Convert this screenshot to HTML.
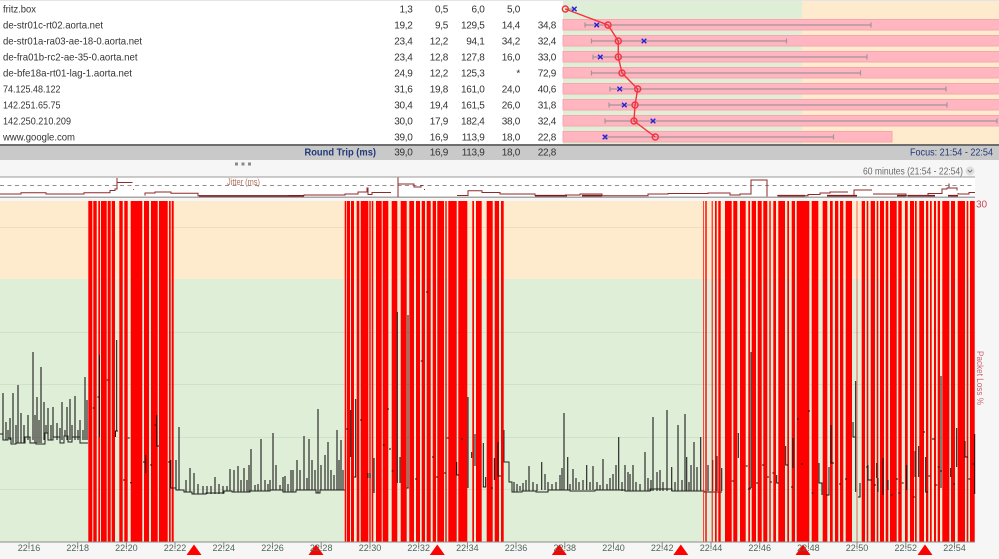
<!DOCTYPE html>
<html><head><meta charset="utf-8"><style>
html,body{margin:0;padding:0;background:#fff;width:999px;height:559px;overflow:hidden}
svg{display:block;filter:blur(.3px)}
text{font-family:"Liberation Sans",sans-serif;font-size:10.5px}
.h{fill:#333}
.n{fill:#333;text-anchor:end;font-size:10px;letter-spacing:-.3px}
.t{fill:#4f6655;font-size:9px;text-anchor:middle}
.b{fill:#1f3a78}
</style></head><body>
<svg width="999" height="559" viewBox="0 0 999 559" xmlns="http://www.w3.org/2000/svg">
<rect width="999" height="559" fill="#fff"/>
<rect x="0" y="0" width="999" height="1" fill="#e4e4e4"/>
<!-- hop chart background -->
<rect x="563" y="1" width="239" height="143" fill="#dfeed6"/>
<rect x="802" y="1" width="197" height="143" fill="#feeacd"/>
<g fill="#ffb6c1" stroke="#f7a6ac" stroke-width="1">
<rect x="563" y="19.5" width="437" height="10.5"/>
<rect x="563" y="35.5" width="437" height="10.5"/>
<rect x="563" y="51.5" width="437" height="10.5"/>
<rect x="563" y="67.5" width="437" height="10.5"/>
<rect x="563" y="83.5" width="437" height="10.5"/>
<rect x="563" y="99.5" width="437" height="10.5"/>
<rect x="563" y="115.5" width="437" height="10.5"/>
<rect x="563" y="131.5" width="329" height="10.5"/>
</g>
<!-- whiskers -->
<path fill="none" stroke="#a0949a" stroke-width="1.2" d="M585 25H871M585 22.5V27.5M871 22.5V27.5M591.5 41H786.5M591.5 38.5V43.5M786.5 38.5V43.5M593 57H867M593 54.5V59.5M867 54.5V59.5M591.5 73H860.5M591.5 70.5V75.5M860.5 70.5V75.5M610 89H946M610 86.5V91.5M946 86.5V91.5M609 105H947M609 102.5V107.5M947 102.5V107.5M605 121H997M605 118.5V123.5M997 118.5V123.5M605 137H833.5M605 134.5V139.5M833.5 134.5V139.5M565 9H574"/>
<!-- latency line -->
<polyline fill="none" stroke="#f5333f" stroke-width="1.4" points="565.3,9 608,25 618.3,41 618.3,57 622,73 637.7,89 635,105 634,121 655.3,137"/>
<g fill="none" stroke="#f5333f" stroke-width="1.4">
<circle cx="565.3" cy="9" r="3"/><circle cx="608" cy="25" r="3"/><circle cx="618.3" cy="41" r="3"/><circle cx="618.3" cy="57" r="3"/><circle cx="622" cy="73" r="3"/><circle cx="637.7" cy="89" r="3"/><circle cx="635" cy="105" r="3"/><circle cx="634" cy="121" r="3"/><circle cx="655.3" cy="137" r="3"/>
</g>
<path fill="none" stroke="#2222dd" stroke-width="1.4" d="M572 6.700l4.600 4.600m0-4.600l-4.600 4.600M594.400 22.700l4.600 4.600m0-4.600l-4.600 4.600M641.700 38.700l4.600 4.600m0-4.600l-4.600 4.600M598 54.700l4.600 4.600m0-4.600l-4.600 4.600M617.400 86.700l4.600 4.600m0-4.600l-4.600 4.600M622 102.700l4.600 4.600m0-4.600l-4.600 4.600M650.700 118.700l4.600 4.600m0-4.600l-4.600 4.600M602.700 134.700l4.600 4.600m0-4.600l-4.600 4.600"/>
<!-- table -->
<text class="h" x="3" y="12.500" textLength="33" lengthAdjust="spacingAndGlyphs">fritz.box</text>
<text class="h" x="3" y="28.500" textLength="100" lengthAdjust="spacingAndGlyphs">de-str01c-rt02.aorta.net</text>
<text class="h" x="3" y="44.500" textLength="139" lengthAdjust="spacingAndGlyphs">de-str01a-ra03-ae-18-0.aorta.net</text>
<text class="h" x="3" y="60.500" textLength="134.500" lengthAdjust="spacingAndGlyphs">de-fra01b-rc2-ae-35-0.aorta.net</text>
<text class="h" x="3" y="76.500" textLength="129" lengthAdjust="spacingAndGlyphs">de-bfe18a-rt01-lag-1.aorta.net</text>
<text class="h" x="3" y="92.500" textLength="57.500" lengthAdjust="spacingAndGlyphs">74.125.48.122</text>
<text class="h" x="3" y="108.500" textLength="57.500" lengthAdjust="spacingAndGlyphs">142.251.65.75</text>
<text class="h" x="3" y="124.500" textLength="68" lengthAdjust="spacingAndGlyphs">142.250.210.209</text>
<text class="h" x="3" y="140.500" textLength="72" lengthAdjust="spacingAndGlyphs">www.google.com</text>
<g>
<text class="n" x="412.500" y="12.500">1,3</text><text class="n" x="448" y="12.500">0,5</text><text class="n" x="484.500" y="12.500">6,0</text><text class="n" x="520" y="12.500">5,0</text>
<text class="n" x="412.500" y="28.500">19,2</text><text class="n" x="448" y="28.500">9,5</text><text class="n" x="484.500" y="28.500">129,5</text><text class="n" x="520" y="28.500">14,4</text><text class="n" x="556" y="28.500">34,8</text>
<text class="n" x="412.500" y="44.500">23,4</text><text class="n" x="448" y="44.500">12,2</text><text class="n" x="484.500" y="44.500">94,1</text><text class="n" x="520" y="44.500">34,2</text><text class="n" x="556" y="44.500">32,4</text>
<text class="n" x="412.500" y="60.500">23,4</text><text class="n" x="448" y="60.500">12,8</text><text class="n" x="484.500" y="60.500">127,8</text><text class="n" x="520" y="60.500">16,0</text><text class="n" x="556" y="60.500">33,0</text>
<text class="n" x="412.500" y="76.500">24,9</text><text class="n" x="448" y="76.500">12,2</text><text class="n" x="484.500" y="76.500">125,3</text><text class="n" x="520" y="76.500">*</text><text class="n" x="556" y="76.500">72,9</text>
<text class="n" x="412.500" y="92.500">31,6</text><text class="n" x="448" y="92.500">19,8</text><text class="n" x="484.500" y="92.500">161,0</text><text class="n" x="520" y="92.500">24,0</text><text class="n" x="556" y="92.500">40,6</text>
<text class="n" x="412.500" y="108.500">30,4</text><text class="n" x="448" y="108.500">19,4</text><text class="n" x="484.500" y="108.500">161,5</text><text class="n" x="520" y="108.500">26,0</text><text class="n" x="556" y="108.500">31,8</text>
<text class="n" x="412.500" y="124.500">30,0</text><text class="n" x="448" y="124.500">17,9</text><text class="n" x="484.500" y="124.500">182,4</text><text class="n" x="520" y="124.500">38,0</text><text class="n" x="556" y="124.500">32,4</text>
<text class="n" x="412.500" y="140.500">39,0</text><text class="n" x="448" y="140.500">16,9</text><text class="n" x="484.500" y="140.500">113,9</text><text class="n" x="520" y="140.500">18,0</text><text class="n" x="556" y="140.500">22,8</text>
</g>
<!-- summary band -->
<rect x="0" y="144" width="999" height="2" fill="#6e6e6e"/>
<rect x="0" y="146" width="999" height="14" fill="#c9c9c9"/>
<text class="b" x="304.500" y="155.500" style="font-weight:bold" textLength="71.500" lengthAdjust="spacingAndGlyphs">Round Trip (ms)</text>
<g>
<text class="n" x="412.500" y="155.500">39,0</text><text class="n" x="448" y="155.500">16,9</text><text class="n" x="484.500" y="155.500">113,9</text><text class="n" x="520" y="155.500">18,0</text><text class="n" x="556" y="155.500">22,8</text>
</g>
<text class="b" x="910" y="155.500" textLength="83" lengthAdjust="spacingAndGlyphs">Focus: 21:54 - 22:54</text>
<!-- splitter -->
<rect x="0" y="160" width="999" height="399" fill="#f6f6f6"/>
<rect x="235" y="162.500" width="3" height="3" fill="#8a8a8a"/><rect x="241.500" y="162.500" width="3" height="3" fill="#8a8a8a"/><rect x="248" y="162.500" width="3" height="3" fill="#8a8a8a"/>
<text x="863" y="174.500" fill="#6a6a6a" textLength="100" lengthAdjust="spacingAndGlyphs">60 minutes (21:54 - 22:54)</text>
<circle cx="970" cy="171" r="4.500" fill="#dedede"/>
<path d="M967.800 170l2.200 2.200 2.200-2.200" fill="none" stroke="#777" stroke-width="1"/>
<!-- jitter chart -->
<rect x="0" y="177" width="975" height="20" fill="#fff"/>
<rect x="0" y="176.500" width="975" height="1" fill="#9a9a9a"/>
<rect x="975" y="176.500" width="24" height="1" fill="#f6f6f6"/>
<rect x="0" y="196.500" width="975" height="1.500" fill="#a8a8a8"/>
<path d="M0 185.500H975" stroke="#8f8f8f" stroke-width="1" stroke-dasharray="4 3.500" fill="none"/>
<text x="227" y="185" fill="#b5705a" style="font-size:9px" textLength="33" lengthAdjust="spacingAndGlyphs">Jitter (ms)</text>
<path fill="none" stroke="#8d2a2a" stroke-width="1" d="M0 194H21V192.700H46V194H84V192.700H110V190.500H115V189H117V182.700V178M117 182.500H132.500M133 189.500h.8M145 195.500V193H155V192H171V193.300H198V195.700H289V195.500H304V195H345V194H358V192H367V188H368V194.500H372M372 195V192.500H391M398 177.500V197M398 184H414V187H421V185.500H423M424 189.500h1M457 195.500H468V190.700H482V192.500H500V194H535V195.700"/>
<path fill="none" stroke="#7a1a1a" stroke-width="1.600" d="M199 196H290M289 196H304M535 195.700H567M582 195.700H602M778 195.700H805M827 195.700H857M908 195.700H935M948 195.700H958M897 195.700H906"/>
<path fill="none" stroke="#8d2a2a" stroke-width="1" d="M565 195H580V194H602V195.700H648V194H668V193.500H708V193H730V195H740V194H751V186V180H767V196.500M777 195.700H808V194.500H820V193H830V192H848M854 195V190H872M873 194H906V195.700H928V193.500H942V189H947V188H957V190.500M958 193V194H969V192.500H975"/>
<path fill="none" stroke="#8d2a2a" stroke-width="1" d="M949 183.500V188"/>
<!-- main chart background -->
<rect x="0" y="201" width="975" height="78" fill="#feeacd"/>
<rect x="0" y="279" width="975" height="263" fill="#dfeed6"/>
<path stroke="#000" stroke-opacity=".06" stroke-width="1" fill="none" d="M0 227.500H975M0 332.500H975M0 384.500H975M0 437.500H975M0 489.500H975"/>
<!-- packet series: baselines -->
<path fill="none" stroke="#222" stroke-width="1" d="M0 434H3V440H8V438H11V444H16V443H25V437H30V443H36V444H45V433H48V440H53V437H60V443H64V436H68V442H72V437H80V443H88"/>
<path fill="none" stroke="#222" stroke-width="1" d="M172 488H176V490H184V492H192V494H206V493H224V491H232V492H250V491H270V490H283V492H296V490H316V493H320V490H345"/>
<path fill="none" stroke="#222" stroke-width="1" d="M504 430V462H509V482H512V492H522V491H536V492H548V490H570V491H595V490H625V491H650V489H672V491H704V492H722"/>
<!-- packet series: spikes -->
<path fill="none" stroke="#262626" stroke-width="1.150" d="M3 440V393M6 440V422M8 440V430M10 440V418M13 443V393M16 443V425M18 443V385M21 443V413M24 443V425M28 440V415M33 440V352M35 443V415M37 443V397M39 443V420M41 443V367M44 440V402M46 433V425M48 436V408M51 440V425M53 437V407M57 440V423M60 440V428M62 440V402M65 436V430M67 440V407M70 440V399M72 440V425M75 440V396M78 440V430M80 440V420M83 440V430M85 440V377M87 440V400"/>
<path fill="none" stroke="#262626" stroke-width="1.150" d="M176 490V460M179 490V427M186 492V480M190 492V468M194 494V473M198 494V484M203 494V486M207 494V486M211 494V486M215 494V477M219 494V484M223 494V486M227 491V486M230 491V469M234 492V470M238 492V466M241 492V480M244 492V468M247 492V480M249 492V465M251 491V449M255 491V485M258 491V484M261 491V439M265 491V480M268 491V484M270 491V480M273 490V433M276 490V465M280 490V485M283 492V477M285 492V476M288 492V484M291 492V470M293 492V470M297 490V460M300 490V470M304 490V436M307 490V478M309 490V439M312 490V460M315 490V470M318 493V409M321 490V465M325 490V455M328 490V442M331 490V470M334 490V475M337 490V430M339 490V460M341 490V440M343 490V470"/>
<path fill="none" stroke="#262626" stroke-width="1.150" d="M514 492V482M517 492V484M520 491V486M523 491V483M526 491V480M529 491V466M533 491V482M537 491V484M541.700 490V462M545 490V474M548 490V482M552 490V484M556 490V482M560 490V475M562 490V468M564 490V413M567.700 490V457M570 490V484M573 490V469M576 490V478M579 490V482M583 490V480M586.700 490V465M590 490V482M593 490V466M597 490V482M600 490V485M603 490V459M607 490V484M610 490V478M613 490V474M616 490V465M618.700 490V437M622 491V482M625 491V465M628 491V472M630 491V474M633 491V465M636 491V482M640 491V484M645 491V452M648 491V478M651 491V480M653 491V417M657 491V472M660 491V470M663 491V482M667 491V410M671.700 491V467M675 491V482M678 491V425M682 491V480M685 491V414M686.700 491V457M689 491V482M691 491V465M694 491V442M697 491V467M700.700 491V437M708 491V465M712.700 491V460M717 491V456M721.700 491V468"/>
<!-- red loss bars -->
<path fill="none" stroke="#ff0000" stroke-width="341" transform="translate(0 371.500)" d="M88.300 0H92.300M93.300 0H96.700M98.300 0H100M101 0H106.700M107.700 0H110.700M111.700 0H115M119.300 0H122.700M124.300 0H127.700M130.700 0H142.300M144 0H149M151 0H157.700M159 0H167.700M169 0H170.700M171.700 0H173.700
M344.700 0H346M346.700 0H350M351 0H354M356.700 0H359.300M360.700 0H368.300M369.300 0H370.700M371.700 0H373.300M376 0H381.700M382.700 0H388.300M391.700 0H397.300M400.700 0H406.700M409.300 0H414M416 0H420M421.700 0H425M426.700 0H430.700M432.700 0H436M437.300 0H444M445.300 0H446.700M448.300 0H456.700M458.300 0H467.300M472.300 0H474M476 0H481.700M486.700 0H492.700M494.700 0H499M501 0H503.700
M703.300 0H704M705.300 0H706.700M711.700 0H712.700M715 0H716.700M718.300 0H720.700M725 0H731.700M733.300 0H737.300M740 0H745.700M748.300 0H750M751.700 0H756M757.700 0H761.700M763.300 0H767.300M769.300 0H770.700M773.300 0H776M778.300 0H785M787.300 0H789M791.700 0H795M796.700 0H809.300M811.700 0H818.300M822.700 0H827.300M830 0H832.700M835 0H838.300M840 0H843.300M845.700 0H852M856.700 0H857.300M861.700 0H865M866.700 0H868.300M870.700 0H875M876.700 0H878.300M880 0H884M885.700 0H888.300M890 0H896.700M898.300 0H901.700M905 0H907.700M910 0H914M915 0H916.700M919.300 0H924M926 0H928.300M930 0H931.700M934 0H936M937.700 0H940M942.300 0H949.300M951 0H955M957.700 0H965M966.700 0H968.300M970 0H974.700"/>
<!-- series over red -->
<path fill="none" stroke="#111" stroke-width="1" d="M92.700 408h2M97.300 397h2M99.500 355V437M106.700 380h2M116.700 340V431M115.500 437V431H118M127.700 438h2M123 480h2M130 482.700h2M143 462h2M145.700 455V473M150 465h2M154 425h2M156.700 415V446H159M168 462h2M170.700 460V488H173
M346 429h2M350.700 410V457M355.700 399V477H354M360 420h2M368 478V473M370 478V473M374 458V493M382.700 445h2M387 409h2M389 449h2M391.700 471h2M397.300 312V483M400 457V483M406.700 488h2M408 315V488M415 479h2M420.700 361h2M426 292h2M432 457h2M436 477h2M444 473h2M446.700 438h2M456.700 462V475H459M461 439h2M468 397V488M471.700 452V458M475 434V466M483.300 443V487H486M485.700 477V487M491 488h2M494.300 458V480M498 442V476H501
M731.700 481h2M738.300 433V458M745.700 466h2M748 489h2V488H751M751 352V488M756 483h2M762 465h2M767 477h2M770 482h2M772.300 473h2M776.700 475V483H779M785.700 446V465H788M791 487h2M793 438V468M797 419h2M801 464h2M808 411h2M811.700 493h2M819 463V483H822V495M829 467V495H826M831 425V463H834M839 484h2M845 479h2M853 422V437H855M855.700 381V492M860 483V497H858M866 467h2M868 465V480H872M874 485h2M876.700 463V478M878 492V478M883 458V495M888 480V490M890.700 495h2M896 479h2M898.300 493h2M901.700 483h2M906.700 465V490M913 497h2M915 451V477M918.700 446V477M923 432h2M925.700 457V492H928M928.300 476h2M932 439h3M935.300 485h2M937.700 467h2M940 471h2M941 376V488M950.700 468V477M953 484h2M956.700 428V467M965 441V457H968M968.300 479h2M971.700 464h2M974.700 434V494"/>
<!-- right labels -->
<text x="976" y="207.500" fill="#c8485a" style="font-size:10px">30</text>
<text transform="translate(977 351) rotate(90)" fill="#cf5f6e" style="font-size:9.500px" textLength="54" lengthAdjust="spacingAndGlyphs">Packet Loss %</text>
<!-- axis -->
<rect x="0" y="541.500" width="975" height="1" fill="#8c8c8c"/>
<g fill="#ff0000">
<path d="M194 544.500L201.500 555H186.500ZM316 544.500L323.500 555H308.500ZM437.300 544.500L444.800 555H429.800ZM559.300 544.500L566.800 555H551.800ZM680.800 544.500L688.300 555H673.300ZM803 544.500L810.500 555H795.500ZM925 544.500L932.500 555H917.500Z"/>
</g>
<path stroke="#8a8a8a" stroke-width="1" fill="none" d="M29 542V549M77.700 542V549M126.400 542V549M175 542V549M223.800 542V549M272.500 542V549M321.200 542V549M370 542V549M418.700 542V549M467.400 542V549M516 542V549M564.800 542V549M613.500 542V549M662.200 542V549M711 542V549M759.700 542V549M808.400 542V549M857 542V549M905.800 542V549M954.500 542V549"/>
<g>
<text class="t" x="29" y="551">22:16</text><text class="t" x="77.700" y="551">22:18</text><text class="t" x="126.400" y="551">22:20</text><text class="t" x="175" y="551">22:22</text><text class="t" x="223.800" y="551">22:24</text><text class="t" x="272.500" y="551">22:26</text><text class="t" x="321.200" y="551">22:28</text><text class="t" x="370" y="551">22:30</text><text class="t" x="418.700" y="551">22:32</text><text class="t" x="467.400" y="551">22:34</text><text class="t" x="516" y="551">22:36</text><text class="t" x="564.800" y="551">22:38</text><text class="t" x="613.500" y="551">22:40</text><text class="t" x="662.200" y="551">22:42</text><text class="t" x="711" y="551">22:44</text><text class="t" x="759.700" y="551">22:46</text><text class="t" x="808.400" y="551">22:48</text><text class="t" x="857" y="551">22:50</text><text class="t" x="905.800" y="551">22:52</text><text class="t" x="954.500" y="551">22:54</text>
</g>
</svg>
</body></html>
